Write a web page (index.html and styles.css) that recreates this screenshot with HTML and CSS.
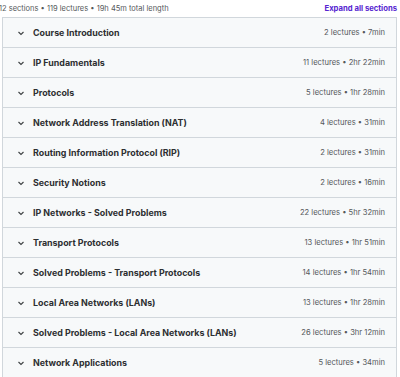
FILE: index.html
```html
<!DOCTYPE html>
<html lang="en">
<head>
<meta charset="UTF-8" />
<title>Course content</title>
<link rel="stylesheet" href="styles.css">
</head>
<body>
<div class="summary">
  <span class="stats">12 sections • 119 lectures • 19h 45m total length</span>
  <a class="expand" href="#">Expand all sections</a>
</div>

<div class="sections">
  <div class="section"><span class="chev"><svg viewBox="0 0 8 8" width="8" height="8"><path d="M1.5 3 L4 5.5 L6.5 3" fill="none" stroke="#3e4143" stroke-width="1.1"/></svg></span><span class="title">Course Introduction</span><span class="meta">2 lectures • 7min</span></div>
  <div class="section"><span class="chev"><svg viewBox="0 0 8 8" width="8" height="8"><path d="M1.5 3 L4 5.5 L6.5 3" fill="none" stroke="#3e4143" stroke-width="1.1"/></svg></span><span class="title">IP Fundamentals</span><span class="meta">11 lectures • 2hr 22min</span></div>
  <div class="section"><span class="chev"><svg viewBox="0 0 8 8" width="8" height="8"><path d="M1.5 3 L4 5.5 L6.5 3" fill="none" stroke="#3e4143" stroke-width="1.1"/></svg></span><span class="title">Protocols</span><span class="meta">5 lectures • 1hr 28min</span></div>
  <div class="section"><span class="chev"><svg viewBox="0 0 8 8" width="8" height="8"><path d="M1.5 3 L4 5.5 L6.5 3" fill="none" stroke="#3e4143" stroke-width="1.1"/></svg></span><span class="title">Network Address Translation (NAT)</span><span class="meta">4 lectures • 31min</span></div>
  <div class="section"><span class="chev"><svg viewBox="0 0 8 8" width="8" height="8"><path d="M1.5 3 L4 5.5 L6.5 3" fill="none" stroke="#3e4143" stroke-width="1.1"/></svg></span><span class="title">Routing Information Protocol (RIP)</span><span class="meta">2 lectures • 31min</span></div>
  <div class="section"><span class="chev"><svg viewBox="0 0 8 8" width="8" height="8"><path d="M1.5 3 L4 5.5 L6.5 3" fill="none" stroke="#3e4143" stroke-width="1.1"/></svg></span><span class="title">Security Notions</span><span class="meta">2 lectures • 16min</span></div>
  <div class="section"><span class="chev"><svg viewBox="0 0 8 8" width="8" height="8"><path d="M1.5 3 L4 5.5 L6.5 3" fill="none" stroke="#3e4143" stroke-width="1.1"/></svg></span><span class="title">IP Networks - Solved Problems</span><span class="meta">22 lectures • 5hr 32min</span></div>
  <div class="section"><span class="chev"><svg viewBox="0 0 8 8" width="8" height="8"><path d="M1.5 3 L4 5.5 L6.5 3" fill="none" stroke="#3e4143" stroke-width="1.1"/></svg></span><span class="title">Transport Protocols</span><span class="meta">13 lectures • 1hr 51min</span></div>
  <div class="section"><span class="chev"><svg viewBox="0 0 8 8" width="8" height="8"><path d="M1.5 3 L4 5.5 L6.5 3" fill="none" stroke="#3e4143" stroke-width="1.1"/></svg></span><span class="title">Solved Problems - Transport Protocols</span><span class="meta">14 lectures • 1hr 54min</span></div>
  <div class="section"><span class="chev"><svg viewBox="0 0 8 8" width="8" height="8"><path d="M1.5 3 L4 5.5 L6.5 3" fill="none" stroke="#3e4143" stroke-width="1.1"/></svg></span><span class="title">Local Area Networks (LANs)</span><span class="meta">13 lectures • 1hr 28min</span></div>
  <div class="section"><span class="chev"><svg viewBox="0 0 8 8" width="8" height="8"><path d="M1.5 3 L4 5.5 L6.5 3" fill="none" stroke="#3e4143" stroke-width="1.1"/></svg></span><span class="title">Solved Problems - Local Area Networks (LANs)</span><span class="meta">26 lectures • 3hr 12min</span></div>
  <div class="section"><span class="chev"><svg viewBox="0 0 8 8" width="8" height="8"><path d="M1.5 3 L4 5.5 L6.5 3" fill="none" stroke="#3e4143" stroke-width="1.1"/></svg></span><span class="title">Network Applications</span><span class="meta">5 lectures • 34min</span></div>
</div>
</body>
</html>
```

FILE: styles.css
```css
html, body {
  margin: 0;
  padding: 0;
  background: #fff;
  font-family: Inter, "Noto Sans", sans-serif;
  color: #2d2f31;
  overflow: hidden;
}

.summary {
  display: flex;
  justify-content: space-between;
  align-items: center;
  height: 17px;
  margin-left: -1px;
  padding-right: 3px;
}

.stats {
  font-size: 7.5px;
  color: #55585a;
}

.expand {
  font-size: 7.7px;
  font-weight: 700;
  color: #5624d0;
  text-decoration: none;
}

.sections {
  margin: 0 3px 0 2px;
  border: 1px solid #d1d7dc;
  border-bottom: none;
}

.section {
  display: flex;
  align-items: center;
  height: 29px;
  padding: 0 11px 0 14px;
  background: #f7f9fa;
  border-bottom: 1px solid #d1d7dc;
}

.chev {
  display: flex;
  width: 8px;
  margin-right: 8px;
}

.title {
  flex: 1;
  font-size: 8.9px;
  font-weight: 700;
}

.meta {
  font-size: 7.6px;
  color: #55585a;
}
```
